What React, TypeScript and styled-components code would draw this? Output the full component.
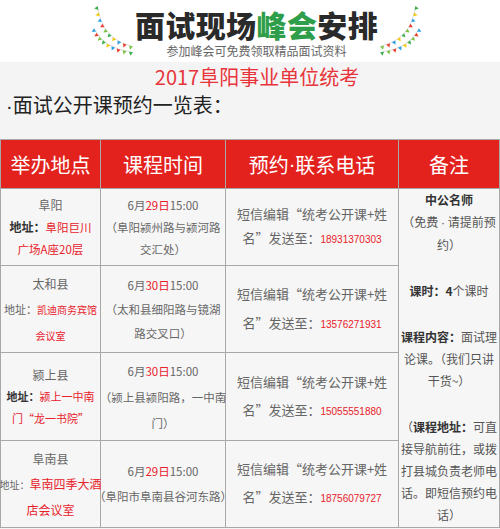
import React from "react"
import styled, { createGlobalStyle } from "styled-components"

const GlobalStyle = createGlobalStyle`
  html, body {
    margin: 0;
    padding: 0;
    background: #f4f4f4;
  }
  body {
    width: 500px;
    overflow: hidden;
    font-family: "Noto Sans CJK SC", "Noto Sans", sans-serif;
  }
`

const Page = styled.div`
  width: 500px;
  background: #f4f4f4;
`

const Banner = styled.div`
  display: flex;
  justify-content: center;
  align-items: flex-start;
  height: 62px;
  padding-left: 13px;
  box-sizing: border-box;
  background: #fff;
`

const TitleBlock = styled.div`
  display: flex;
  flex-direction: column;
  align-items: center;
`

const Title = styled.div`
  margin-top: 8px;
  font-size: 30px;
  line-height: 33px;
  font-weight: 900;
  letter-spacing: 0.4px;
  color: #2a2a2a;
`

const Green = styled.span`
  color: #2f9e4a;
`

const Subtitle = styled.div`
  margin-top: 2px;
  font-size: 12px;
  line-height: 15px;
  color: #666;
`

const FlagSvg = styled.svg<{ $flip?: boolean }>`
  flex: none;
  width: 45px;
  height: 56px;
  transform: ${({ $flip }) => ($flip ? "scaleX(-1)" : "none")};
`

const Headline = styled.div`
  padding-left: 14px;
  font-size: 20px;
  line-height: 30px;
  text-align: center;
  color: #e8353b;
`

const ListTitle = styled.div`
  padding-left: 6px;
  font-size: 20px;
  line-height: 26px;
  color: #222;
`

const Dot = styled.span`
  font-family: "Liberation Sans", Arial, sans-serif;
`

const Table = styled.div`
  display: grid;
  grid-template-columns: 99px 124px 172px 100px;
  grid-template-rows: 48px 76px 86px 87px 86px;
  gap: 1px;
  padding: 1px;
  margin-top: 20px;
  width: 500px;
  box-sizing: border-box;
  background: #a8a8a8;
`

const HeadCell = styled.div`
  display: flex;
  align-items: center;
  justify-content: center;
  background: #e3221e;
  color: #fff;
  font-size: 20px;
  white-space: nowrap;
`

const Cell = styled.div<{ $lh: number; $size?: number }>`
  display: flex;
  flex-direction: column;
  align-items: center;
  justify-content: center;
  background: #f6f6f6;
  color: #666;
  text-align: center;
  white-space: nowrap;
  font-size: ${({ $size }) => $size ?? 12}px;
  line-height: ${({ $lh }) => $lh}px;
`

const Line = styled.div``

const Red = styled.span<{ $size?: number }>`
  color: #e8212a;
  font-size: ${({ $size }) => ($size ? `${$size}px` : "inherit")};
`

const Small = styled.span<{ $size: number }>`
  font-size: ${({ $size }) => $size}px;
`

const Bold = styled.span<{ $size?: number }>`
  font-weight: 700;
  color: #333;
  font-size: ${({ $size }) => ($size ? `${$size}px` : "inherit")};
`

const Phone = styled.span`
  font-family: "Liberation Sans", Arial, sans-serif;
  font-size: 10px;
  color: #e8212a;
`

const NoteCell = styled.div`
  grid-column: 4;
  grid-row: 2 / span 4;
  display: flex;
  flex-direction: column;
  align-items: center;
  gap: 24px;
  background: #f6f6f6;
  color: #555;
  font-size: 12px;
  line-height: 22px;
  text-align: center;
  white-space: nowrap;
`

const NoteBlock = styled.div`
  display: flex;
  flex-direction: column;
  align-items: center;
`

const FLAG_COLORS = ["#3db04b", "#f2c811", "#2d9fe0", "#e8402f", "#7cc242"]

type Pt = [number, number]

const curveFlags = (p0: Pt, p1: Pt, p2: Pt, n: number, shift: number) => {
  const out: { pts: string; color: string }[] = []
  for (let i = 0; i < n; i++) {
    const t = i / (n - 1)
    const a = (1 - t) * (1 - t)
    const b = 2 * (1 - t) * t
    const c = t * t
    const x = a * p0[0] + b * p1[0] + c * p2[0]
    const y = a * p0[1] + b * p1[1] + c * p2[1]
    let dx = 2 * (1 - t) * (p1[0] - p0[0]) + 2 * t * (p2[0] - p1[0])
    let dy = 2 * (1 - t) * (p1[1] - p0[1]) + 2 * t * (p2[1] - p1[1])
    const len = Math.hypot(dx, dy) || 1
    dx /= len
    dy /= len
    const nx = -dy
    const ny = dx
    const pts = [
      [x - dx * 2, y - dy * 2],
      [x + dx * 2, y + dy * 2],
      [x + nx * 3.8, y + ny * 3.8],
    ]
      .map(([px, py]) => `${px.toFixed(2)},${py.toFixed(2)}`)
      .join(" ")
    out.push({ pts, color: FLAG_COLORS[(i + shift) % FLAG_COLORS.length] })
  }
  return out
}

const STRINGS: [Pt, Pt, Pt, number, number][] = [
  [[8, 8], [12, 38], [41, 46], 10, 0],
  [[5, 30], [14, 48], [41, 52], 9, 2],
]

const Bunting: React.FC<{ flip?: boolean }> = ({ flip }) => (
  <FlagSvg $flip={flip} viewBox="0 0 45 56">
    {STRINGS.map(([p0, p1, p2, n, shift], k) => (
      <g key={k}>
        <path
          d={`M${p0[0]} ${p0[1]} Q${p1[0]} ${p1[1]} ${p2[0]} ${p2[1]}`}
          fill="none"
          stroke="#c9c9c9"
          strokeWidth="0.6"
        />
        {curveFlags(p0, p1, p2, n, shift).map((f, i) => (
          <polygon key={i} points={f.pts} fill={f.color} />
        ))}
      </g>
    ))}
  </FlagSvg>
)

export default function App() {
  return (
    <Page>
      <GlobalStyle />
      <Banner>
        <Bunting />
        <TitleBlock>
          <Title>
            面试现场<Green>峰会</Green>安排
          </Title>
          <Subtitle>参加峰会可免费领取精品面试资料</Subtitle>
        </TitleBlock>
        <Bunting flip />
      </Banner>

      <Headline>2017阜阳事业单位统考</Headline>
      <ListTitle>
        <Dot>·</Dot>面试公开课预约一览表：
      </ListTitle>

      <Table>
        <HeadCell>举办地点</HeadCell>
        <HeadCell>课程时间</HeadCell>
        <HeadCell>
          预约<Dot>·</Dot>联系电话
        </HeadCell>
        <HeadCell>备注</HeadCell>

        <NoteCell>
          <NoteBlock>
            <Bold>中公名师</Bold>
            <Line>
              （免费 <Dot>·</Dot> 请提前预
            </Line>
            <Line>约）</Line>
          </NoteBlock>
          <NoteBlock>
            <Line>
              <Bold>课时：4</Bold>个课时
            </Line>
          </NoteBlock>
          <NoteBlock>
            <Line>
              <Bold>课程内容：</Bold>面试理
            </Line>
            <Line>论课。（我们只讲</Line>
            <Line>干货~）</Line>
          </NoteBlock>
          <NoteBlock>
            <Line>
              （<Bold>课程地址：</Bold>可直
            </Line>
            <Line>接导航前往，或拨</Line>
            <Line>打县城负责老师电</Line>
            <Line>话。即短信预约电</Line>
            <Line>话）</Line>
          </NoteBlock>
        </NoteCell>

        {/* 阜阳 */}
        <Cell $lh={22}>
          <Line>阜阳</Line>
          <Line>
            <Bold>地址：</Bold>
            <Red $size={11.5}>阜阳巨川</Red>
          </Line>
          <Line>
            <Red $size={11.5}>广场A座20层</Red>
          </Line>
        </Cell>
        <Cell $lh={22} $size={11.5}>
          <Line>
            6月<Red>29日</Red>15:00
          </Line>
          <Line>（阜阳颍州路与颍河路</Line>
          <Line>交汇处）</Line>
        </Cell>
        <Cell $lh={24} $size={13}>
          <Line>短信编辑“统考公开课+姓</Line>
          <Line>
            名”发送至：<Phone>18931370303</Phone>
          </Line>
        </Cell>

        {/* 太和县 */}
        <Cell $lh={25}>
          <Line>太和县</Line>
          <Line>
            <Small $size={11}>地址：</Small>
            <Red $size={10}>凯迪商务宾馆</Red>
          </Line>
          <Line>
            <Red $size={10}>会议室</Red>
          </Line>
        </Cell>
        <Cell $lh={24} $size={11.5}>
          <Line>
            6月<Red>30日</Red>15:00
          </Line>
          <Line>（太和县细阳路与镜湖</Line>
          <Line>路交叉口）</Line>
        </Cell>
        <Cell $lh={29} $size={13}>
          <Line>短信编辑“统考公开课+姓</Line>
          <Line>
            名”发送至：<Phone>13576271931</Phone>
          </Line>
        </Cell>

        {/* 颍上县 */}
        <Cell $lh={21}>
          <Line>颍上县</Line>
          <Line>
            <Bold $size={11}>地址：</Bold>
            <Red $size={11}>颍上一中南</Red>
          </Line>
          <Line>
            <Red $size={11}>门“龙一书院”</Red>
          </Line>
        </Cell>
        <Cell $lh={26} $size={11.5}>
          <Line>
            6月<Red>30日</Red>15:00
          </Line>
          <Line>（颍上县颍阳路，一中南</Line>
          <Line>门）</Line>
        </Cell>
        <Cell $lh={28} $size={13}>
          <Line>短信编辑“统考公开课+姓</Line>
          <Line>
            名”发送至：<Phone>15055551880</Phone>
          </Line>
        </Cell>

        {/* 阜南县 */}
        <Cell $lh={25}>
          <Line>阜南县</Line>
          <Line>
            <Small $size={10}>地址：</Small>
            <Red $size={12}>阜南四季大酒</Red>
          </Line>
          <Line>
            <Red $size={12}>店会议室</Red>
          </Line>
        </Cell>
        <Cell $lh={25} $size={11.5}>
          <Line>
            6月<Red>29日</Red>15:00
          </Line>
          <Line>（阜阳市阜南县谷河东路）</Line>
        </Cell>
        <Cell $lh={28} $size={13}>
          <Line>短信编辑“统考公开课+姓</Line>
          <Line>
            名”发送至：<Phone>18756079727</Phone>
          </Line>
        </Cell>
      </Table>
    </Page>
  )
}
